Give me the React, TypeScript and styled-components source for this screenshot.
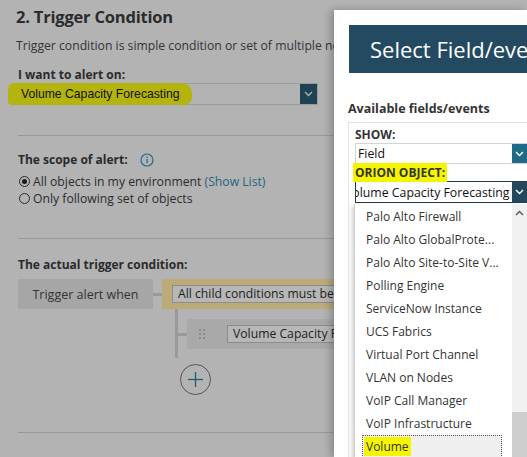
import React from 'react';
import styled, { createGlobalStyle } from 'styled-components';

const GlobalStyle = createGlobalStyle`
  html, body {
    margin: 0;
    padding: 0;
  }
  body {
    width: 527px;
    height: 457px;
    overflow: hidden;
    background: #b3b3b3;
    font-family: "Open Sans", "Noto Sans", sans-serif;
  }
`;

const Page = styled.div`
  display: flex;
  width: 527px;
  height: 457px;
  overflow: hidden;
  background: #b3b3b3;
`;

/* ---------- dimmed page behind the dialog ---------- */

const Backdrop = styled.div`
  width: 334px;
  flex: none;
  box-sizing: border-box;
  padding: 6px 0 0 18px;
  overflow: hidden;
  color: #2b2b2b;
`;

const Title = styled.h2`
  margin: 0 0 0 -2px;
  font-size: 16.5px;
  line-height: 22px;
  font-weight: 700;
  letter-spacing: -0.2px;
  white-space: nowrap;
`;

const Desc = styled.p`
  margin: 9px 0 0 -2px;
  font-size: 12.2px;
  line-height: 18px;
  color: #333;
  white-space: nowrap;
`;

const FieldLabel = styled.div<{ $top: number }>`
  margin-top: ${(p) => p.$top}px;
  display: flex;
  align-items: center;
  gap: 12px;
  font-size: 12px;
  line-height: 16px;
  font-weight: 700;
  white-space: nowrap;
`;

const Select = styled.div`
  display: flex;
  width: 300px;
  height: 22px;
  box-sizing: border-box;
  border: 1px solid #9b9b9b;
`;

const SelectText = styled.div`
  flex: 1;
  display: flex;
  align-items: center;
  font-family: "Liberation Sans", Arial, sans-serif;
  font-size: 12.2px;
  color: #111;
`;

const DimMarker = styled.span`
  margin-left: -11px;
  padding: 4px 12px 4px 13px;
  background: #b4b40e;
  border-radius: 6px 10px 8px 4px;
`;

const DimButton = styled.div`
  width: 17px;
  display: flex;
  align-items: center;
  justify-content: center;
  background: #1f4252;
`;

const Divider = styled.div<{ $top: number }>`
  margin-top: ${(p) => p.$top}px;
  height: 1px;
  background: #999;
`;

const RadioRow = styled.label<{ $top?: number }>`
  display: flex;
  align-items: center;
  margin-top: ${(p) => p.$top ?? 0}px;
  font-size: 12.2px;
  line-height: 17px;
  white-space: nowrap;
`;

const Radio = styled.span<{ $checked?: boolean }>`
  width: 11px;
  height: 11px;
  margin: 0 3px 0 1px;
  box-sizing: border-box;
  border: 1px solid #2b2b2b;
  border-radius: 50%;
  display: flex;
  align-items: center;
  justify-content: center;
  &::after {
    content: '';
    display: ${(p) => (p.$checked ? 'block' : 'none')};
    width: 5px;
    height: 5px;
    border-radius: 50%;
    background: #1b1b1b;
  }
`;

const Link = styled.span`
  color: #276283;
`;

const TriggerRow = styled.div`
  display: flex;
  height: 30px;
  margin-top: 6px;
`;

const WhenBox = styled.div`
  width: 135px;
  flex: none;
  display: flex;
  align-items: center;
  justify-content: center;
  background: #a6a6a6;
  font-size: 12.5px;
  color: #333;
`;

const Connector = styled.div`
  width: 9px;
  height: 3px;
  flex: none;
  align-self: center;
  background: #9a9a9a;
`;

const GroupBox = styled.div`
  flex: 1;
  display: flex;
  align-items: center;
  padding-left: 10px;
  background: #bcab78;
`;

const InlineSelect = styled.div<{ $left?: number }>`
  flex: none;
  width: 220px;
  height: 18px;
  box-sizing: border-box;
  margin-left: ${(p) => p.$left ?? 0}px;
  padding-left: 5px;
  border: 1px solid #8c8c8c;
  background: #b7b7b7;
  font-size: 12.2px;
  line-height: 15px;
  color: #1e1e1e;
  white-space: nowrap;
`;

const Tree = styled.div`
  margin-left: 157px;
  height: 49px;
  box-sizing: border-box;
  padding-top: 10px;
  border-left: 3px solid #9a9a9a;
`;

const ChildRow = styled.div`
  display: flex;
  height: 30px;
`;

const ChildBox = styled.div`
  flex: 1;
  display: flex;
  align-items: center;
  padding-left: 12px;
  background: #a9a9a9;
`;

const AddButton = styled.div`
  width: 31px;
  height: 31px;
  margin: 6px 0 0 162px;
  box-sizing: border-box;
  border: 1.5px solid #555;
  border-radius: 50%;
  display: flex;
  align-items: center;
  justify-content: center;
`;

const FooterEdge = styled.div`
  margin: 24px 0 0 256px;
  height: 10px;
  border-top: 1px solid #8a8a8a;
`;

/* ---------- dialog ---------- */

const Modal = styled.div`
  position: relative;
  z-index: 1;
  flex: 1;
  min-width: 0;
  margin-top: 10px;
  padding: 15px 0 0 14px;
  background: #fff;
  box-shadow: -3px 0 8px rgba(0, 0, 0, 0.25);
  overflow: hidden;
  color: #333;
`;

const ModalHeader = styled.div`
  height: 48px;
  margin-left: 1px;
  padding-left: 21px;
  background: #234a61;
  color: #fff;
  font-size: 22px;
  line-height: 48px;
  white-space: nowrap;
`;

const PanelTitle = styled.div`
  margin-top: 27px;
  font-size: 12.5px;
  line-height: 18px;
  font-weight: 700;
  white-space: nowrap;
`;

const Panel = styled.div`
  margin-top: 4px;
  padding: 4px 0 0 6px;
  border: 1px solid #e2e2e2;
  border-right: none;
  border-bottom: none;
`;

const PanelLabel = styled.div<{ $top?: number }>`
  margin-top: ${(p) => p.$top ?? 0}px;
  font-size: 12px;
  line-height: 16px;
  font-weight: 700;
  white-space: nowrap;
`;

const Marker = styled.span`
  margin-left: -2px;
  padding: 1px 2px;
  background: #f5f500;
`;

const FormSelect = styled.div<{ $active?: boolean }>`
  display: flex;
  height: ${(p) => (p.$active ? 22 : 21)}px;
  box-sizing: border-box;
  border: 1px solid ${(p) => (p.$active ? '#1d3c50' : '#d3d3d3')};
  border-right: none;
  background: #fff;
`;

const FormText = styled.div`
  flex: 1;
  min-width: 0;
  overflow: hidden;
  display: flex;
  align-items: center;
  padding-left: 2px;
  font-size: 12.3px;
  color: #111;
  white-space: nowrap;
`;

const Scrolled = styled.span`
  margin-left: -13px;
`;

const FormButton = styled.div<{ $dark?: boolean }>`
  width: 15px;
  flex: none;
  display: flex;
  align-items: center;
  justify-content: center;
  background: ${(p) => (p.$dark ? '#23475d' : '#1f6b85')};
`;

const Dropdown = styled.div`
  display: flex;
  height: 260px;
  margin: 1px 0 0 -1px;
  border-left: 1px solid #cfcfcf;
  box-shadow: -2px 2px 4px rgba(0, 0, 0, 0.18);
  background: #fff;
`;

const Options = styled.ul`
  flex: 1;
  margin: 0;
  padding: 1px 0 0 7px;
  list-style: none;
`;

const Option = styled.li<{ $focused?: boolean }>`
  width: 140px;
  height: 23px;
  box-sizing: border-box;
  padding-left: 3px;
  border: 1px ${(p) => (p.$focused ? 'dotted #555' : 'solid transparent')};
  background: ${(p) => (p.$focused ? '#efefef' : 'transparent')};
  font-size: 12px;
  line-height: 21px;
  color: #333;
  white-space: nowrap;
`;

const ScrollTrack = styled.div`
  width: 15px;
  flex: none;
  display: flex;
  flex-direction: column;
  background: #f0f0f0;
`;

const ScrollArrow = styled.div`
  height: 17px;
  display: flex;
  align-items: center;
  justify-content: center;
`;

const ScrollThumb = styled.div`
  margin-top: 191px;
  flex: 1;
  background: #cdcdcd;
`;

const Chevron = ({ up, color = '#fff' }: { up?: boolean; color?: string }) => (
  <svg width="9" height="6" viewBox="0 0 9 6">
    <polyline
      points={up ? '1,5 4.5,1.5 8,5' : '1,1 4.5,4.5 8,1'}
      fill="none"
      stroke={color}
      strokeWidth="1.4"
    />
  </svg>
);

const InfoIcon = () => (
  <svg width="14" height="14" viewBox="0 0 14 14">
    <circle cx="7" cy="7" r="6" fill="none" stroke="#2a6a88" strokeWidth="1.2" />
    <rect x="6.4" y="6" width="1.3" height="4.2" fill="#2a6a88" />
    <rect x="6.4" y="3.7" width="1.3" height="1.3" fill="#2a6a88" />
  </svg>
);

const DragDots = () => (
  <svg width="6" height="10" viewBox="0 0 6 10">
    {[0, 4, 8].map((y) =>
      [0, 4].map((x) => <rect key={`${x}-${y}`} x={x} y={y} width="2" height="2" fill="#8b8b8b" />)
    )}
  </svg>
);

const PlusIcon = () => (
  <svg width="17" height="17" viewBox="0 0 17 17">
    <line x1="8.5" y1="1" x2="8.5" y2="16" stroke="#1f5d74" strokeWidth="1.3" />
    <line x1="1" y1="8.5" x2="16" y2="8.5" stroke="#1f5d74" strokeWidth="1.3" />
  </svg>
);

const objects = [
  'Palo Alto Firewall',
  'Palo Alto GlobalProte...',
  'Palo Alto Site-to-Site V...',
  'Polling Engine',
  'ServiceNow Instance',
  'UCS Fabrics',
  'Virtual Port Channel',
  'VLAN on Nodes',
  'VoIP Call Manager',
  'VoIP Infrastructure',
  'Volume',
];

export default function App() {
  return (
    <Page>
      <GlobalStyle />
      <Backdrop>
        <Title>2. Trigger Condition</Title>
        <Desc>Trigger condition is simple condition or set of multiple nested conditions.</Desc>

        <FieldLabel $top={12}>I want to alert on:</FieldLabel>
        <Select>
          <SelectText>
            <DimMarker>Volume Capacity Forecasting</DimMarker>
          </SelectText>
          <DimButton>
            <Chevron color="#9fb3bd" />
          </DimButton>
        </Select>

        <Divider $top={30} />

        <FieldLabel $top={16}>
          The scope of alert:
          <InfoIcon />
        </FieldLabel>
        <RadioRow $top={5}>
          <Radio $checked />
          <span>
            All objects in my environment <Link>(Show List)</Link>
          </span>
        </RadioRow>
        <RadioRow>
          <Radio />
          <span>Only following set of objects</span>
        </RadioRow>

        <Divider $top={31} />

        <FieldLabel $top={18}>The actual trigger condition:</FieldLabel>
        <TriggerRow>
          <WhenBox>Trigger alert when</WhenBox>
          <Connector />
          <GroupBox>
            <InlineSelect>All child conditions must be satisfied (AND)</InlineSelect>
          </GroupBox>
        </TriggerRow>
        <Tree>
          <ChildRow>
            <Connector />
            <ChildBox>
              <DragDots />
              <InlineSelect $left={22}>Volume Capacity Forecasting</InlineSelect>
            </ChildBox>
          </ChildRow>
        </Tree>
        <AddButton>
          <PlusIcon />
        </AddButton>

        <Divider $top={37} />
        <FooterEdge />
      </Backdrop>

      <Modal>
        <ModalHeader>Select Field/events</ModalHeader>
        <PanelTitle>Available fields/events</PanelTitle>
        <Panel>
          <PanelLabel>SHOW:</PanelLabel>
          <FormSelect>
            <FormText>Field</FormText>
            <FormButton>
              <Chevron />
            </FormButton>
          </FormSelect>
          <PanelLabel $top={1}>
            <Marker>ORION OBJECT:</Marker>
          </PanelLabel>
          <FormSelect $active>
            <FormText>
              <Scrolled>Volume Capacity Forecasting</Scrolled>
            </FormText>
            <FormButton $dark>
              <Chevron />
            </FormButton>
          </FormSelect>
          <Dropdown>
            <Options>
              {objects.map((name) => (
                <Option key={name} $focused={name === 'Volume'}>
                  {name === 'Volume' ? <Marker>{name}</Marker> : name}
                </Option>
              ))}
            </Options>
            <ScrollTrack>
              <ScrollArrow>
                <Chevron up color="#555" />
              </ScrollArrow>
              <ScrollThumb />
            </ScrollTrack>
          </Dropdown>
        </Panel>
      </Modal>
    </Page>
  );
}
